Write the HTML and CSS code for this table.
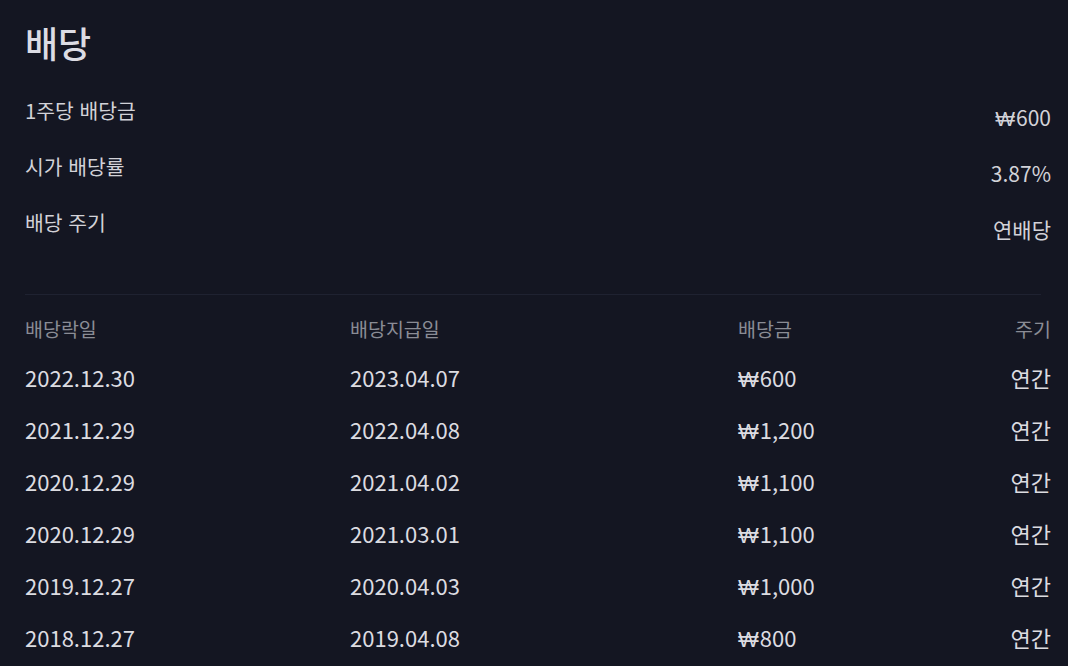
FILE: index.html
```html
<!DOCTYPE html>
<html lang="ko">
<head>
<meta charset="utf-8">
<link rel="stylesheet" href="styles.css">
</head>
<body>
<main class="page">
  <h1 class="title">배당</h1>
  <section class="summary">
    <div class="sum-row"><span class="sum-label">1주당 배당금</span><span class="sum-value"><span class="won">₩</span>600</span></div>
    <div class="sum-row"><span class="sum-label">시가 배당률</span><span class="sum-value">3.87%</span></div>
    <div class="sum-row"><span class="sum-label">배당 주기</span><span class="sum-value">연배당</span></div>
  </section>
  <hr class="divider">
  <section class="table">
    <div class="trow thead"><span>배당락일</span><span>배당지급일</span><span>배당금</span><span class="end">주기</span></div>
    <div class="trow"><span>2022.12.30</span><span>2023.04.07</span><span><span class="won">₩</span>600</span><span class="end">연간</span></div>
    <div class="trow"><span>2021.12.29</span><span>2022.04.08</span><span><span class="won">₩</span>1,200</span><span class="end">연간</span></div>
    <div class="trow"><span>2020.12.29</span><span>2021.04.02</span><span><span class="won">₩</span>1,100</span><span class="end">연간</span></div>
    <div class="trow"><span>2020.12.29</span><span>2021.03.01</span><span><span class="won">₩</span>1,100</span><span class="end">연간</span></div>
    <div class="trow"><span>2019.12.27</span><span>2020.04.03</span><span><span class="won">₩</span>1,000</span><span class="end">연간</span></div>
    <div class="trow"><span>2018.12.27</span><span>2019.04.08</span><span><span class="won">₩</span>800</span><span class="end">연간</span></div>
  </section>
</main>
</body>
</html>
```

FILE: styles.css
```css
* { box-sizing: border-box; }
html, body {
  margin: 0;
  background: #141622;
  height: 100%;
  overflow: hidden;
}
body {
  font-family: "Noto Sans CJK KR", "Noto Sans", sans-serif;
  color: #d9d9df;
}
.page {
  padding: 16px 17px 0 25px;
}
.title {
  margin: 0;
  font-size: 36px;
  font-weight: 500;
  line-height: 52px;
  color: #dcdce4;
}
.summary {
  display: flex;
  flex-direction: column;
  margin-top: 28px;
}
.sum-row {
  display: flex;
  justify-content: space-between;
  align-items: flex-start;
  height: 56px;
}
.sum-label {
  font-size: 20.4px;
  line-height: 28px;
  color: #d2d2d8;
}
.sum-value {
  font-size: 21px;
  line-height: 28px;
  margin-top: 7px;
  color: #d2d2d8;
}
.won {
  font-family: "DejaVu Sans", sans-serif;
  font-weight: 300;
  letter-spacing: 1px;
}
.divider {
  margin: 30px 10px 0 0;
  border: 0;
  height: 1px;
  background: #1f2231;
}
.table {
  display: flex;
  flex-direction: column;
  margin-top: 11px;
}
.trow {
  display: grid;
  grid-template-columns: 325px 388px 1fr auto;
  align-items: center;
  height: 52px;
  font-size: 22px;
  color: #dcdce1;
}
.trow .end { text-align: right; }
.thead {
  height: 45px;
  font-size: 19.5px;
  color: #8a8c95;
}
```
